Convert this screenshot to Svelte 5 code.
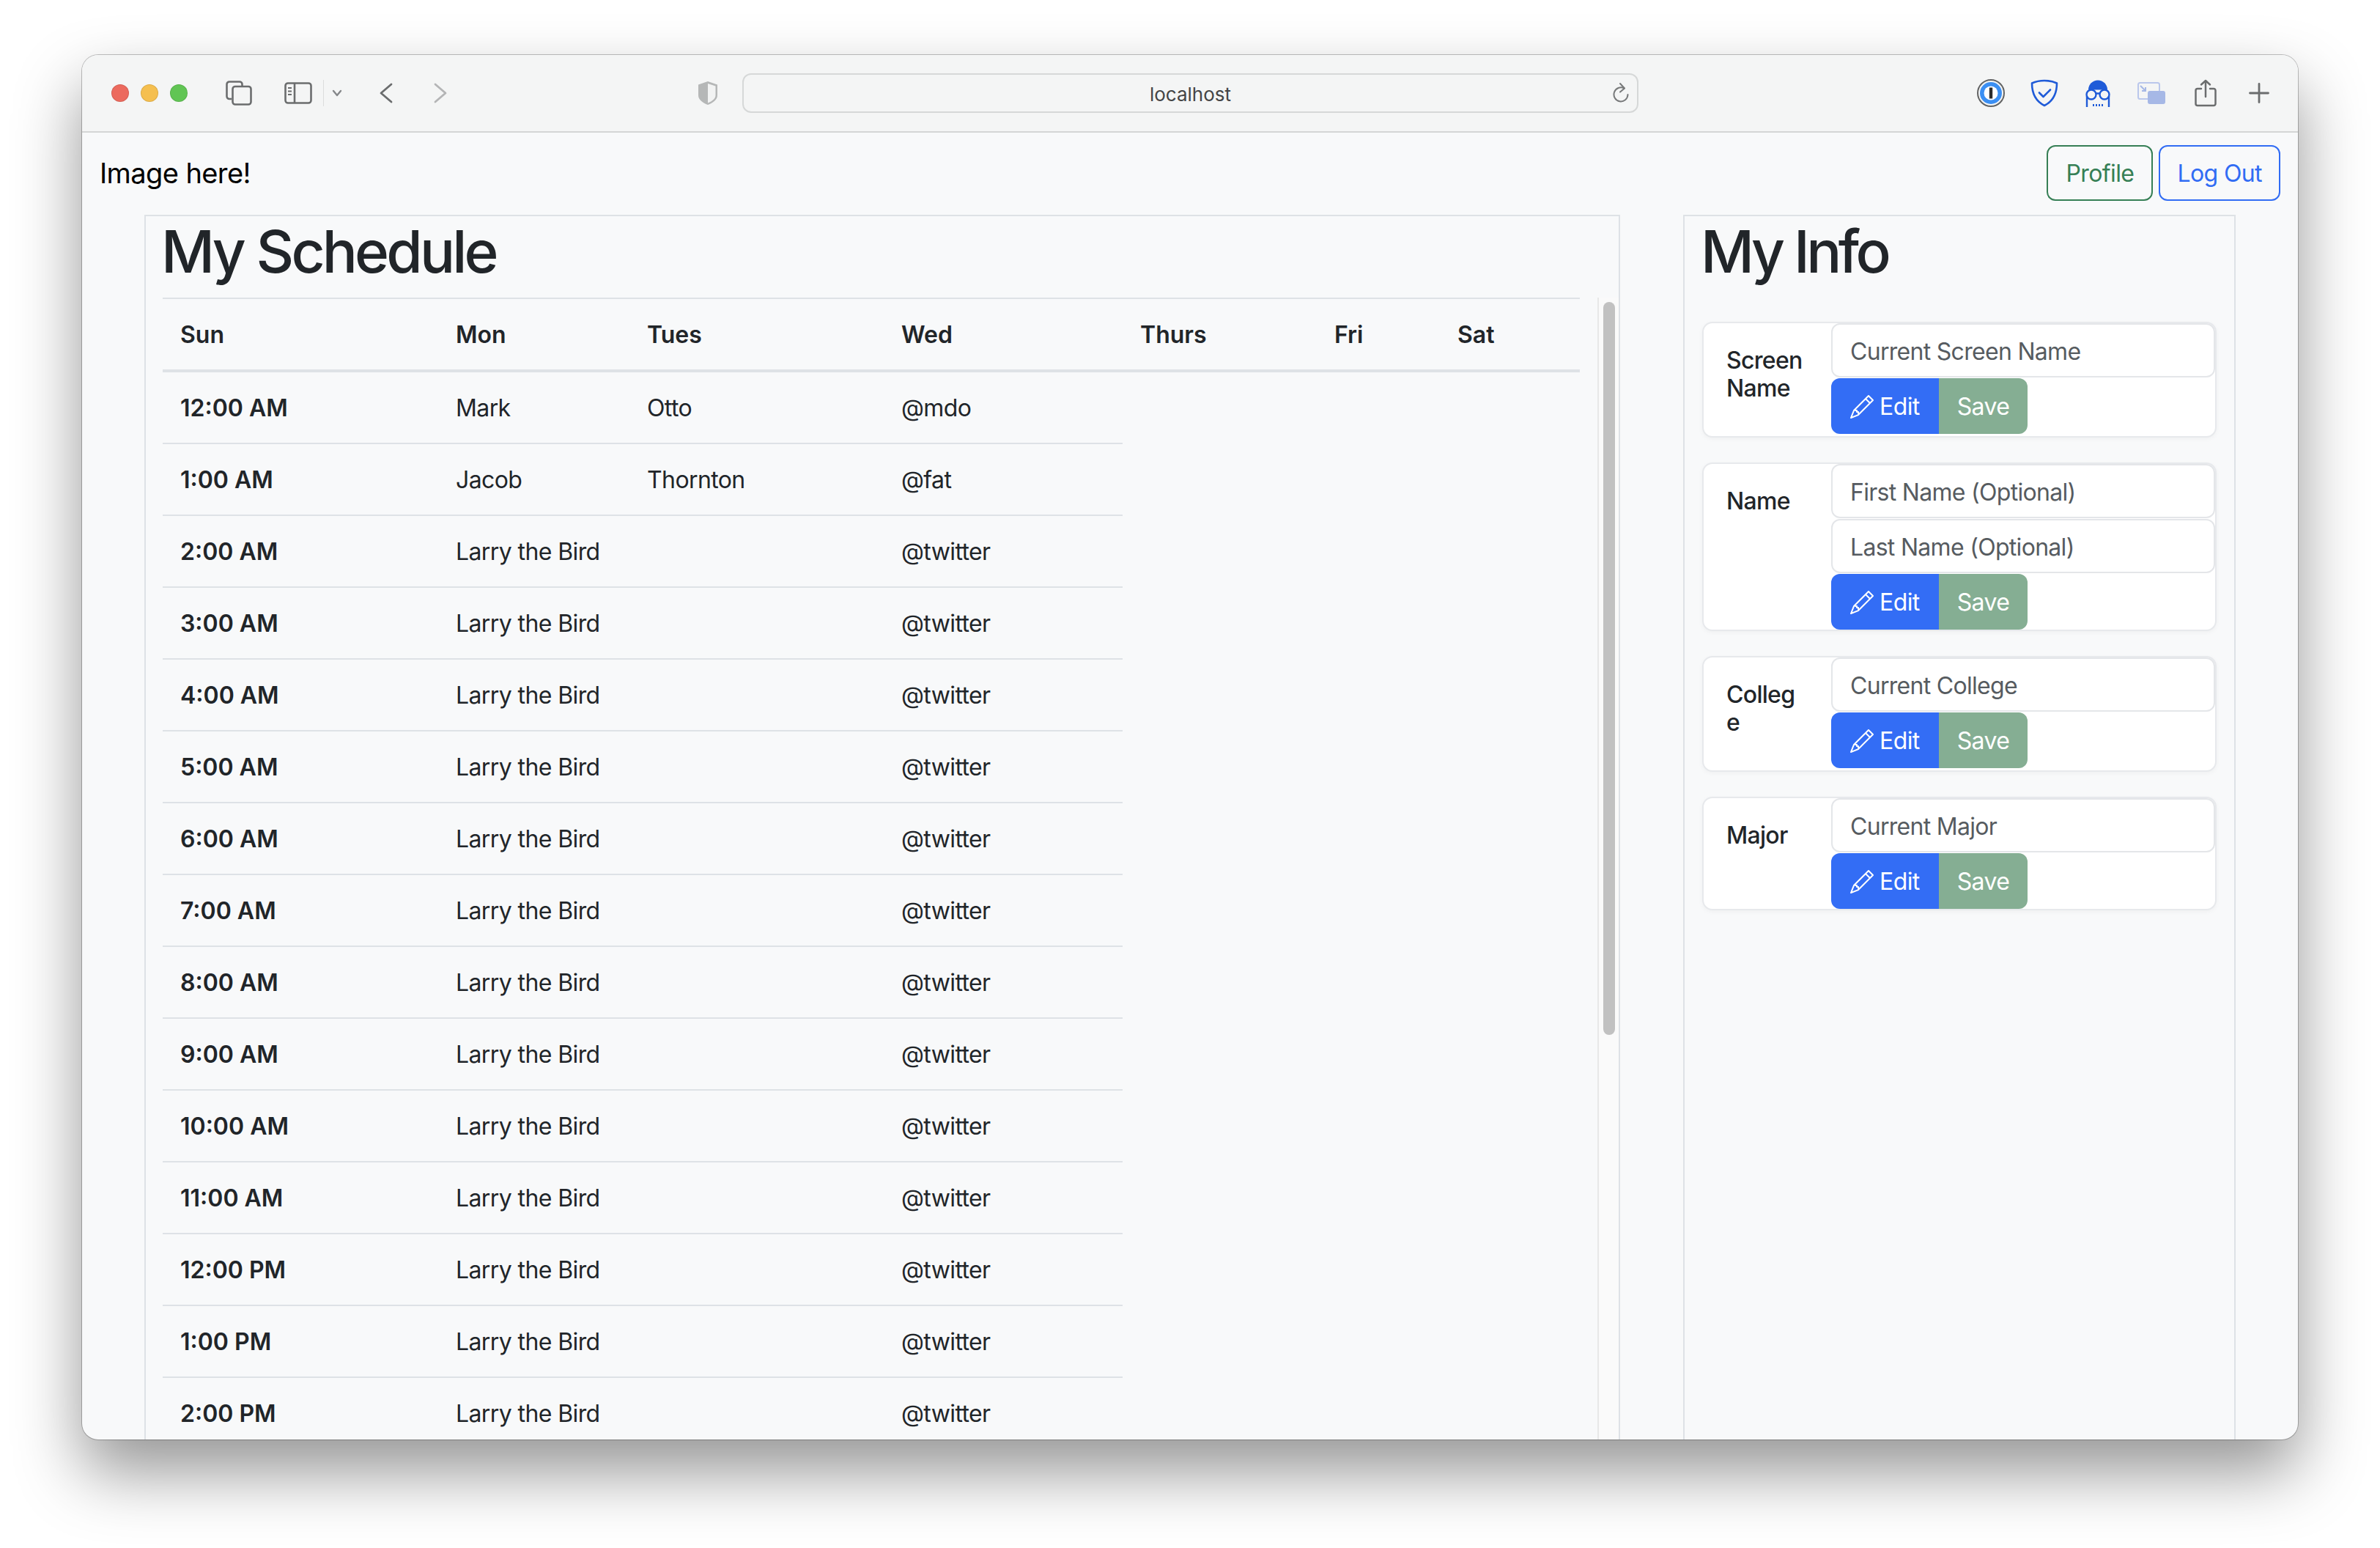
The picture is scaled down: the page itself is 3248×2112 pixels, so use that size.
<script>
    // only the rows that fit in the window
    const times = ['12:00 AM', '1:00 AM', '2:00 AM', '3:00 AM', '4:00 AM', '5:00 AM', '6:00 AM', '7:00 AM', '8:00 AM', '9:00 AM', '10:00 AM', '11:00 AM',
        '12:00 PM', '1:00 PM', '2:00 PM'];
    const days = ['Sun', 'Mon', 'Tues', 'Wed', 'Thurs', 'Fri', 'Sat'];
    const colWidths = ['c1', 'c2', 'c3', 'c4', 'c5', 'c6', 'c7'];

    const infoCards = [
        { label: 'Screen Name', fields: ['Current Screen Name'] },
        { label: 'Name', fields: ['First Name (Optional)', 'Last Name (Optional)'] },
        { label: 'College', fields: ['Current College'] },
        { label: 'Major', fields: ['Current Major'] }
    ];
</script>

<div class="desktop">
<div class="window">
    <header class="toolbar">
        <div class="lights">
            <span class="light red"></span>
            <span class="light yellow"></span>
            <span class="light green"></span>
        </div>

        <svg class="ic-tabs" width="36" height="34" viewBox="0 0 36 34" fill="none" stroke="#6b6d6e" stroke-width="2.6">
            <path d="M8 25H5a3.5 3.5 0 0 1-3.5-3.5V5A3.5 3.5 0 0 1 5 1.5h14A3.5 3.5 0 0 1 22.500 5v3"/>
            <rect x="9.500" y="8" width="25" height="24.500" rx="3.500"/>
        </svg>
        <svg class="ic-side" width="38" height="30" viewBox="0 0 38 30" fill="none" stroke="#6b6d6e" stroke-width="2.6">
            <rect x="1.500" y="1.500" width="35" height="27" rx="3.500"/>
            <path d="M14 1.500v27"/>
            <path d="M5 8h5M5 12.500h5M5 17h5" stroke-width="2"/>
        </svg>
        <span class="sep"></span>
        <svg class="ic-chev" width="14" height="10" viewBox="0 0 14 10" fill="none" stroke="#85878a" stroke-width="2.4" stroke-linecap="round" stroke-linejoin="round">
            <path d="M2 2l5 6 5-6"/>
        </svg>
        <svg class="ic-back" width="18" height="28" viewBox="0 0 18 28" fill="none" stroke="#6b6d6e" stroke-width="2.8" stroke-linecap="round" stroke-linejoin="round">
            <path d="M16 2 2 14l14 12"/>
        </svg>
        <svg class="ic-fwd" width="18" height="28" viewBox="0 0 18 28" fill="none" stroke="#b4b5b6" stroke-width="2.8" stroke-linecap="round" stroke-linejoin="round">
            <path d="M2 2l14 12L2 26"/>
        </svg>

        <svg class="ic-priv" width="28" height="34" viewBox="0 0 28 34">
            <path d="M14 1 27 5.500V20c0 6-6 10.500-13 13C7 30.500 1 26 1 20V5.500z" fill="#b5b7b7"/>
            <path d="M14 4 24.500 7.500V20c0 4.500-4.500 8-10.500 10.500z" fill="#f2f3f3"/>
        </svg>

        <div class="address">
            <span class="host">localhost</span>
            <svg class="ic-reload" width="24" height="28" viewBox="0 0 24 28" fill="none" stroke="#77797a" stroke-width="2" stroke-linecap="round" stroke-linejoin="round">
                <path d="M16.500 8.500A9.500 9.500 0 1 0 21.500 17"/>
                <path d="M11 2l6 6.500-6 5"/>
            </svg>
        </div>

        <svg class="ic-op" width="38" height="38" viewBox="0 0 38 38">
            <circle cx="19" cy="19" r="18" fill="#f4f5f5" stroke="#626364" stroke-width="2"/>
            <circle cx="19" cy="19" r="15" fill="#3b8ff3"/>
            <circle cx="19" cy="19" r="9.500" fill="#fff"/>
            <rect x="16.800" y="11.500" width="4.400" height="15" fill="#2b2c2e"/>
        </svg>
        <svg class="ic-guard" width="38" height="38" viewBox="0 0 38 38" fill="none" stroke="#1f5bd8" stroke-linecap="round" stroke-linejoin="round">
            <path d="M19 2c6 0 12 1.200 17 3.500C36 20 31 30 19 36 7 30 2 20 2 5.500 7 3.200 13 2 19 2z" stroke-width="2.6"/>
            <path d="M12 18.500l5.500 5.500L27 14.500" stroke-width="2.6"/>
        </svg>
        <svg class="ic-ghost" width="36" height="37" viewBox="0 0 36 37">
            <path d="M5 13.500a13 13 0 0 1 26 0z" fill="#1f5bd8"/>
            <g fill="none" stroke="#1f5bd8" stroke-width="2.400">
                <circle cx="9" cy="20" r="6.500"/>
                <circle cx="27" cy="20" r="6.500"/>
                <path d="M15 18.500h6M3 22v15M33 22v15"/>
            </g>
            <path d="M11 33h2v3h-2zM15 33h2v3h-2zM19 33h2v3h-2zM23 33h2v3h-2z" fill="#1f5bd8"/>
        </svg>
        <svg class="ic-pip" width="38" height="30" viewBox="0 0 38 30">
            <rect x="1" y="1" width="29" height="22" rx="2.500" fill="none" stroke="#bac7ec" stroke-width="2"/>
            <rect x="14" y="12" width="24" height="18" rx="3" fill="#a6b8e6"/>
            <path d="M4 5l7 7M11 7v5H6" fill="none" stroke="#a6b8e6" stroke-width="2"/>
        </svg>
        <svg class="ic-share" width="30" height="38" viewBox="0 0 30 38" fill="none" stroke="#6b6d6e" stroke-width="2.500" stroke-linecap="round" stroke-linejoin="round">
            <path d="M9 13H4a2.500 2.500 0 0 0-2.500 2.500v18A2.500 2.500 0 0 0 4 36h22a2.500 2.500 0 0 0 2.500-2.500v-18A2.500 2.500 0 0 0 26 13h-5"/>
            <path d="M15 24V2M9 7.500 15 2l6 5.500"/>
        </svg>
        <svg class="ic-plus" width="28" height="28" viewBox="0 0 28 28" fill="none" stroke="#6b6d6e" stroke-width="2.800" stroke-linecap="round">
            <path d="M14 1.500v25M1.500 14h25"/>
        </svg>
    </header>

    <div class="page">
        <div class="topbar">
            <span class="logo">Image here!</span>
            <div class="top-actions">
                <button class="outline profile">Profile</button>
                <button class="outline logout">Log Out</button>
            </div>
        </div>

        <main class="columns">
            <section class="panel schedule">
                <h1>My Schedule</h1>
                <div class="scroll-area">
                    <table>
                        <colgroup>
                            {#each colWidths as c}
                                <col class={c} />
                            {/each}
                        </colgroup>
                        <thead>
                            <tr>
                                {#each days as day}
                                    <th>{day}</th>
                                {/each}
                            </tr>
                        </thead>
                        <tbody>
                            {#each times as time, i}
                                <tr>
                                    <th class="time">{time}</th>
                                    {#if i === 0}
                                        <td>Mark</td><td>Otto</td><td>@mdo</td>
                                    {:else if i === 1}
                                        <td>Jacob</td><td>Thornton</td><td>@fat</td>
                                    {:else}
                                        <td colspan="2">Larry the Bird</td><td>@twitter</td>
                                    {/if}
                                </tr>
                            {/each}
                        </tbody>
                    </table>
                    <div class="rail"><div class="thumb"></div></div>
                </div>
            </section>

            <section class="panel info">
                <h1>My Info</h1>
                <div class="cards">
                    {#each infoCards as card}
                        <div class="card">
                            <div class="card-label">{card.label}</div>
                            <div class="card-body">
                                {#each card.fields as field}
                                    <input type="text" placeholder={field} />
                                {/each}
                                <div class="btn-group">
                                    <button class="edit">
                                        <svg width="32" height="32" viewBox="0 0 16 16" fill="currentColor">
                                            <path d="M12.146.146a.5.5 0 0 1 .708 0l3 3a.5.5 0 0 1 0 .708l-10 10a.5.5 0 0 1-.168.11l-5 2a.5.5 0 0 1-.65-.65l2-5a.5.5 0 0 1 .11-.168l10-10zM11.207 2.5 13.5 4.793 14.793 3.5 12.5 1.207 11.207 2.5zm1.586 3L10.5 3.207 4 9.707V10h.5a.5.5 0 0 1 .5.5v.5h.5a.5.5 0 0 1 .5.5v.5h.293l6.5-6.500zm-9.761 5.175-.106.106-1.528 3.821 3.821-1.528.106-.106A.5.5 0 0 1 5 12.500V12h-.5a.5.5 0 0 1-.5-.5V11h-.5a.5.5 0 0 1-.468-.325z"/>
                                        </svg>
                                        Edit
                                    </button>
                                    <button class="save">Save</button>
                                </div>
                            </div>
                        </div>
                    {/each}
                </div>
            </section>
        </main>
    </div>
</div>
</div>

<style>
    :global(body) {
        margin: 0;
        background: #fff;
        font-family: Inter, "Noto Sans", sans-serif;
    }

    .desktop {
        box-sizing: border-box;
        height: 2112px;
        padding: 75px 0 0 112px;
        overflow: hidden;
    }

    .window {
        box-sizing: border-box;
        width: 3024px;
        height: 1889px;
        border-radius: 22px;
        overflow: hidden;
        display: flex;
        flex-direction: column;
        background: #f8f9fa;
        box-shadow: 0 0 0 1px rgba(0, 0, 0, 0.24), 0 44px 90px rgba(0, 0, 0, 0.42);
    }

    /* browser chrome */
    .toolbar {
        box-sizing: border-box;
        flex: none;
        height: 106px;
        display: flex;
        align-items: center;
        background: #f4f5f5;
        border-bottom: 2px solid #d4d6d6;
        padding-left: 40px;
    }

    .lights {
        display: flex;
        gap: 16px;
    }

    .light {
        box-sizing: border-box;
        width: 24px;
        height: 24px;
        border-radius: 50%;
        border: 1px solid rgba(0, 0, 0, 0.1);
    }

    .red { background: #ec6a5e; }
    .yellow { background: #f5bf4f; }
    .green { background: #61c554; }

    .toolbar svg { flex: none; }
    .ic-tabs { margin-left: 52px; }
    .ic-side { margin-left: 44px; }
    .sep {
        width: 1px;
        height: 36px;
        margin-left: 15px;
        background: #dcdddd;
    }
    .ic-chev { margin-left: 11px; }
    .ic-back { margin-left: 51px; }
    .ic-fwd { margin-left: 56px; }
    .ic-priv { margin-left: 342px; }

    .address {
        box-sizing: border-box;
        position: relative;
        width: 1223px;
        height: 54px;
        margin-left: 33px;
        display: flex;
        align-items: center;
        justify-content: center;
        border: 2px solid #d6d8d8;
        border-radius: 12px;
    }

    .host {
        padding-top: 2px;
        font-size: 26px;
        color: #444546;
    }

    .ic-reload {
        position: absolute;
        right: 10px;
        top: 10px;
    }

    .ic-op { margin-left: 462px; }
    .ic-guard { margin-left: 35px; }
    .ic-ghost { margin-left: 36px; }
    .ic-pip { margin-left: 36px; }
    .ic-share { margin-left: 40px; }
    .ic-plus { margin-left: 44px; }

    /* page */
    .page {
        flex: 1;
        min-height: 0;
        display: flex;
        flex-direction: column;
    }

    .topbar {
        flex: none;
        display: flex;
        justify-content: space-between;
        align-items: center;
        padding: 17px 24px 19px 24px;
    }

    .logo {
        font-size: 38px;
        letter-spacing: -0.6px;
        color: #000;
    }

    .top-actions {
        display: flex;
        gap: 8px;
    }

    button {
        font-family: inherit;
        font-size: 32px;
        line-height: 48px;
        letter-spacing: -0.6px;
        cursor: pointer;
    }

    .outline {
        height: 76px;
        padding: 2px 24px 0;
        background: transparent;
        border-radius: 12px;
    }

    .profile {
        color: #367f55;
        border: 2px solid #367f55;
    }

    .logout {
        padding: 2px 23px 0;
        color: #316cf4;
        border: 2px solid #316cf4;
    }

    .columns {
        flex: 1;
        min-height: 0;
        display: flex;
        gap: 86px;
        padding-left: 85px;
    }

    .panel {
        box-sizing: border-box;
        display: flex;
        flex-direction: column;
        min-height: 0;
        border: 2px solid #dee2e6;
        border-bottom: 0;
    }

    .schedule {
        width: 2014px;
        padding-left: 23px;
    }

    .info {
        width: 754px;
        padding: 0 24px;
    }

    h1 {
        flex: none;
        margin: 0 0 15px -2px;
        font-size: 80px;
        line-height: 96px;
        font-weight: 500;
        color: #212529;
        letter-spacing: -3.8px;
    }

    .info h1 {
        letter-spacing: -4.6px;
    }

    .scroll-area {
        flex: 1;
        min-height: 0;
        overflow: hidden;
        display: flex;
        align-items: flex-start;
        gap: 24px;
    }

    .rail {
        box-sizing: border-box;
        flex: none;
        width: 29px;
        height: 100%;
        padding: 6px 5px 0 6px;
        background: #fafafa;
        border-left: 2px solid #e8e8e8;
    }

    .thumb {
        width: 16px;
        height: 1000px;
        border-radius: 8px;
        background: #c1c1c1;
    }

    table {
        flex: none;
        width: 1934px;
        table-layout: fixed;
        border-collapse: separate;
        border-spacing: 0;
        font-size: 32px;
        line-height: 48px;
        color: #212529;
    }

    .c1 { width: 376px; }
    .c2 { width: 261px; }
    .c3 { width: 347px; }
    .c4 { width: 326px; }
    .c5 { width: 265px; }
    .c6 { width: 168px; }
    .c7 { width: 191px; }

    th, td {
        padding: 25px 24px 23px;
        text-align: left;
        border-bottom: 2px solid #dee2e6;
    }

    th {
        font-weight: 600;
    }

    thead th {
        border-top: 2px solid #dee2e6;
        border-bottom: 4px solid #dee2e6;
    }

    td {
        font-weight: 400;
        letter-spacing: -0.6px;
    }

    .cards {
        display: flex;
        flex-direction: column;
        gap: 34px;
        margin-top: 33px;
    }

    .card {
        display: flex;
        background: #fff;
        border: 2px solid #e7e9ec;
        border-radius: 14px;
        box-shadow: 0 2px 6px rgba(0, 0, 0, 0.04);
    }

    .card-label {
        box-sizing: border-box;
        flex: none;
        width: 174px;
        padding: 32px 34px 46px 31px;
        font-size: 32px;
        line-height: 38px;
        font-weight: 500;
        letter-spacing: -0.7px;
        color: #212529;
        word-break: break-word;
    }

    .card-body {
        flex: 1;
        min-width: 0;
        display: flex;
        flex-direction: column;
        gap: 1px;
    }

    input {
        box-sizing: border-box;
        width: 100%;
        height: 74px;
        padding: 2px 24px 0;
        font-family: inherit;
        font-size: 32px;
        letter-spacing: -0.7px;
        background: #fff;
        border: 2px solid #e4e6e9;
        border-radius: 12px;
        outline: none;
    }

    input::placeholder {
        color: #565b60;
        opacity: 1;
    }

    .btn-group {
        display: flex;
        height: 76px;
    }

    .btn-group button {
        display: flex;
        align-items: center;
        gap: 8px;
        border: 0;
        color: #fff;
    }

    .edit {
        padding: 2px 26px 0;
        background: #336df5;
        border-radius: 12px 0 0 12px;
    }

    .save {
        padding: 2px 25px 0;
        background: #85ae93;
        border-radius: 0 12px 12px 0;
    }
</style>
